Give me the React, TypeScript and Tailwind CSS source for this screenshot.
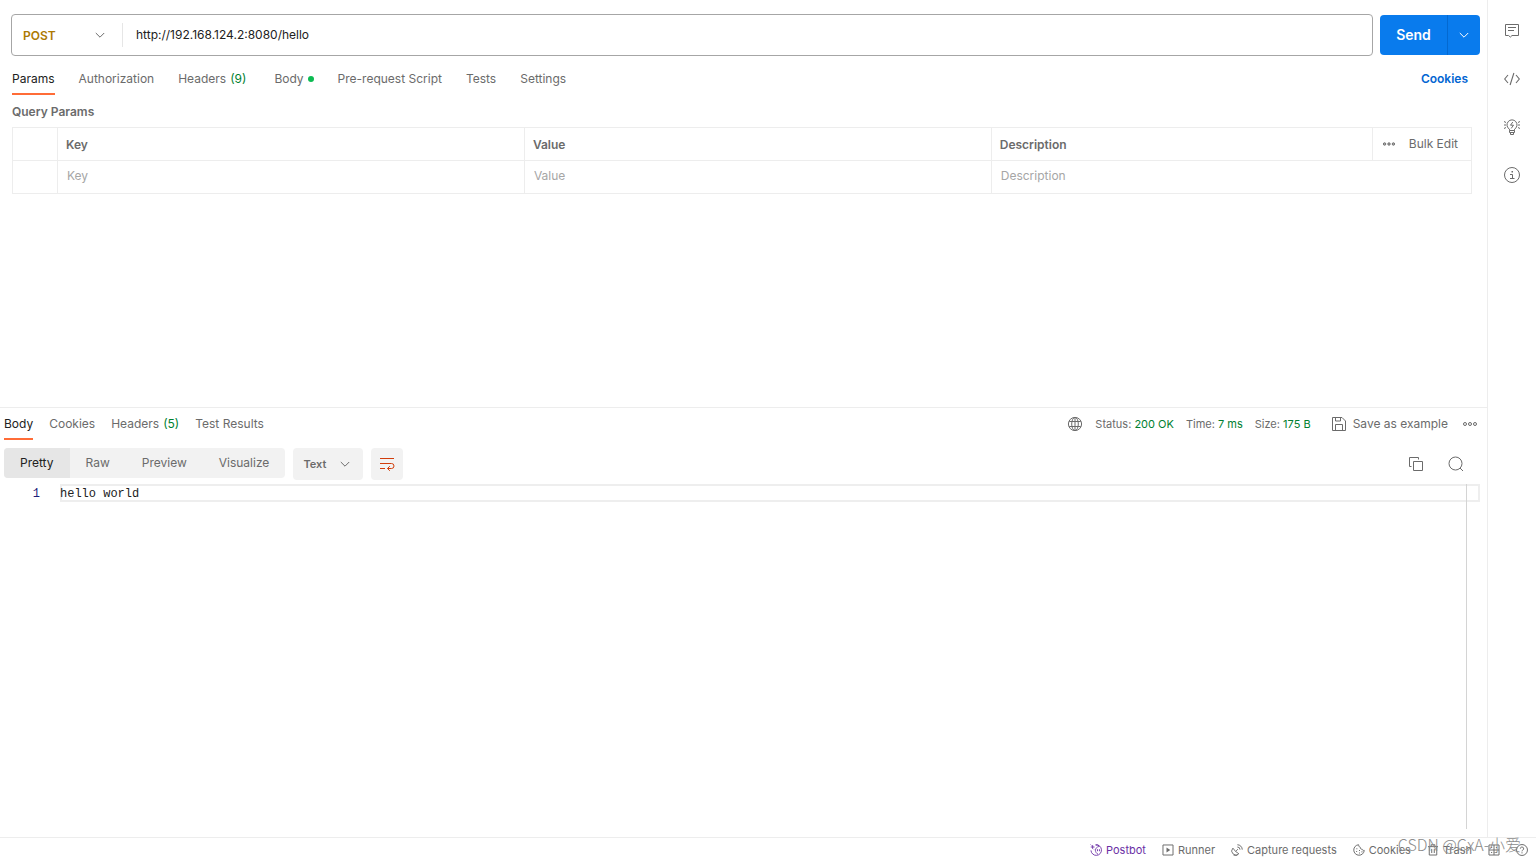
import type { ReactNode } from 'react';

const INTER = "font-['Inter','Noto_Sans_CJK_SC',sans-serif]";

function Icon({ size = 16, children, className = '' }: { size?: number; children: ReactNode; className?: string }) {
  return (
    <svg
      width={size}
      height={size}
      viewBox="0 0 16 16"
      fill="none"
      stroke="currentColor"
      strokeWidth="1"
      className={'shrink-0 ' + className}
      aria-hidden="true"
    >
      {children}
    </svg>
  );
}

const Chevron = ({ className = '' }: { className?: string }) => (
  <Icon size={16} className={className}>
    <path d="M3.8 6 8 10.2 12.2 6" />
  </Icon>
);

const CommentIcon = () => (
  <Icon>
    <path d="M1.5 1.5h13v11H8l-1.700 1.600-1.700-1.600H1.500z" />
    <path d="M4 4.500h8M4 7.500h6" />
  </Icon>
);

const CodeIcon = () => (
  <Icon>
    <path d="M4 4 .7 8 4 12M12 4l3.300 4L12 12M9.900 2 6.100 14" strokeWidth="1.100" />
  </Icon>
);

const BulbIcon = () => (
  <Icon>
    <path d="M5.500 11.500V10.200A5 5 0 1 1 10.500 10.200V11.500z" />
    <path d="M5.500 11.500v2h5v-2M6.500 13.500v2h3v-2" />
    <path d="M8.800 3 6.500 6.200h3L7.200 9.400" />
    <path d="M0 2.500l2 1M0 6h2M0 9.500l2-1M16 2.500l-2 1M16 6h-2M16 9.500l-2-1" />
  </Icon>
);

const InfoIcon = () => (
  <Icon>
    <circle cx="8" cy="8" r="7.500" />
    <path d="M6 7.500h2.500v4M6 11.500h4.500" />
    <path d="M7.500 4h1.500v1.500H7.500z" fill="currentColor" stroke="none" />
  </Icon>
);

const GlobeIcon = () => (
  <Icon>
    <circle cx="8" cy="8" r="6.600" />
    <ellipse cx="8" cy="8" rx="3.300" ry="6.600" />
    <path d="M8 1.400v13.200M2.200 5.500h11.600M2.200 10.500h11.600" />
  </Icon>
);

const SaveIcon = () => (
  <Icon>
    <path d="M1.500 1.500h9.500l3.500 3.500v9.500h-13z" />
    <path d="M4.500 1.500v3.500h5v-3.500M4.500 14.500v-6h7v6" />
  </Icon>
);

const CopyIcon = () => (
  <Icon>
    <path d="M5.500 5.500h9v9h-9z" />
    <path d="M3.500 10.500h-2v-9h9v2" />
  </Icon>
);

const SearchIcon = () => (
  <Icon>
    <circle cx="7.500" cy="7.500" r="6.500" />
    <path d="m12 12 3 3" />
  </Icon>
);

const WrapIcon = () => (
  <Icon>
    <path d="M1 2.500h14M1 7.500h11.500a2.500 2.500 0 0 1 0 5H8.500M1 12.500h5M10.800 10.200 8.500 12.500l2.300 2.300" />
  </Icon>
);

const DotsIcon = () => (
  <Icon>
    <circle cx="3" cy="8" r="1.500" />
    <circle cx="8" cy="8" r="1.500" />
    <circle cx="13" cy="8" r="1.500" />
  </Icon>
);

const SmallDotsIcon = () => (
  <Icon>
    <circle cx="3.600" cy="8" r="1.200" fill="currentColor" fillOpacity="0.5" />
    <circle cx="8" cy="8" r="1.200" fill="currentColor" fillOpacity="0.5" />
    <circle cx="12.400" cy="8" r="1.200" fill="currentColor" fillOpacity="0.5" />
  </Icon>
);

const PostbotIcon = () => (
  <Icon size={12}>
    <path d="M7.500 1.200a7 7 0 1 1-6.200 7.300M7.500 1.200c1.800-.3 3.500.1 4.800 1" strokeWidth="1.200" />
    <path d="M12.300 3.200c-3 .4-5 2.600-5 5.200 0 2.400 1.300 4.300 3.400 5.200" strokeWidth="1.100" />
    <path d="M10 7v2.600M12.600 7v2.600" strokeWidth="1.200" />
    <path d="M3.500 1.500v5M1 4h5M.8.800l1 1M5.500 7.500l.8.800" strokeWidth="1.200" />
  </Icon>
);

const RunnerIcon = () => (
  <Icon size={12}>
    <path d="M1.300 1.300h13.400v13.400H1.300z" strokeWidth="1.300" />
    <path d="M6 4.800 11 8l-5 3.200z" fill="currentColor" stroke="none" />
  </Icon>
);

const CaptureIcon = () => (
  <Icon size={12}>
    <path d="M2.500 5.500a5.300 5.300 0 1 0 8 7.500M2.500 5.500l3.700 4.500 4.300 3M6.200 10l3-3.200M3.500 15h5" strokeWidth="1.200" />
    <path d="M8.500 4a3.500 3.500 0 0 1 3.500 3.500M8.500 1a6.500 6.500 0 0 1 6.500 6.500" strokeWidth="1.300" />
  </Icon>
);

const CookieIcon = () => (
  <Icon size={12}>
    <path
      d="M7.500 1A7 7 0 1 0 15 8.500c-1.300.3-2.500-.2-2.800-1.600C10.500 7 9.400 6 9.700 4.300 8.300 4 7.500 2.600 7.500 1z"
      strokeWidth="1.300"
    />
    <path d="M4.500 6.200h1.300M4.200 10h1.300M8 8.700h1.300M8 12h1.300M11.300 10.500h1.300" strokeWidth="1.400" />
  </Icon>
);

const TrashIcon = () => (
  <Icon size={12}>
    <path d="M1.300 3.500h13.400M5.500 3.500V1h5v2.500M3 3.500v11.200h10V3.500M6.300 6.500v5.500M9.700 6.500v5.500" strokeWidth="1.300" />
  </Icon>
);

const PanesIcon = () => (
  <Icon size={12}>
    <path d="M1.300 1.300h13.400v13.400H1.300zM8 1.300v13.400M1.300 8h13.400" strokeWidth="1.300" />
    <path d="M4 4.700h1.600M10.500 4.700h1.600M4 11.300h1.600M10.500 11.300h1.600" strokeWidth="1.300" />
  </Icon>
);

const HelpIcon = () => (
  <Icon size={12}>
    <circle cx="8" cy="8" r="7.300" strokeWidth="1.300" />
    <path d="M5.800 6.200a2.200 2.200 0 1 1 3.300 1.900c-.8.400-1.100.8-1.100 1.700M8 11v1.500" strokeWidth="1.300" />
  </Icon>
);

function Tab({ label, count, dot, active }: { label: string; count?: string; dot?: boolean; active?: boolean }) {
  return (
    <button
      type="button"
      role="tab"
      aria-selected={!!active}
      className={
        'flex h-8 items-center gap-1 border-b-2 pt-0.5 whitespace-nowrap ' +
        (active ? 'border-[#ff6c37] text-[#212121]' : 'border-transparent text-[#6b6b6b]')
      }
    >
      {label}
      {count && <span className="text-[#007f31]">{count}</span>}
      {dot && <span className="size-1.5 rounded-full bg-[#0cbb52]" />}
    </button>
  );
}

function Stat({ label, value }: { label: string; value: string }) {
  return (
    <span className="whitespace-nowrap">
      {label} <span className="text-[#007f31]">{value}</span>
    </span>
  );
}

function FooterItem({ icon, label, className = '' }: { icon: ReactNode; label: string; className?: string }) {
  return (
    <button type="button" className={'flex items-center gap-1 whitespace-nowrap ' + className}>
      {icon}
      {label}
    </button>
  );
}

function RequestPane() {
  const cell = 'border border-[#ededed]';
  const field = 'block h-8 w-full px-[9px] pb-1 text-[#212121] outline-none placeholder:text-[#a6a6a6]';
  return (
    <section className="h-[407px] shrink-0">
      <div className="flex items-center gap-[7px] pt-3.5 pr-[7px] pl-[11px]">
        <div className="flex h-[42px] flex-1 items-center rounded border border-[#a6a6a6]">
          <div className="flex w-[111px] items-center border-r border-[#e6e6e6]">
            <div className="relative flex w-full items-center">
              <select
                aria-label="Method"
                defaultValue="POST"
                className="h-6 w-full appearance-none bg-transparent pt-0.5 pl-[11px] font-semibold text-[#ad7a03] outline-none"
              >
                <option>GET</option>
                <option>POST</option>
                <option>PUT</option>
                <option>DELETE</option>
              </select>
              <Chevron className="pointer-events-none absolute right-3.5" />
            </div>
          </div>
          <input
            aria-label="Request URL"
            defaultValue="http://192.168.124.2:8080/hello"
            className="h-10 flex-1 px-[13px] pb-0.5 text-[#212121] outline-none"
          />
        </div>
        <div className="flex h-10 overflow-hidden rounded bg-[#097bed] text-white">
          <button type="button" className="w-[67px] text-sm font-semibold">
            Send
          </button>
          <button
            type="button"
            aria-label="Send options"
            className="flex w-[33px] items-center justify-center border-l border-[#0469d1]"
          >
            <Chevron />
          </button>
        </div>
      </div>

      <div className="flex items-center justify-between pt-[7px] pr-[19px] pl-3">
        <div role="tablist" className="flex gap-6">
          <Tab label="Params" active />
          <Tab label="Authorization" />
          <div className="pr-1">
            <Tab label="Headers" count="(9)" />
          </div>
          <Tab label="Body" dot />
          <Tab label="Pre-request Script" />
          <Tab label="Tests" />
          <Tab label="Settings" />
        </div>
        <a href="#cookies" className="font-semibold text-[#0265d2]">
          Cookies
        </a>
      </div>

      <div className="pt-2 pr-[15px] pl-3">
        <h2 className="pb-1.5 leading-[18px] font-semibold">Query Params</h2>
        <table className="w-full table-fixed border-collapse">
          <colgroup>
            <col className="w-[45px]" />
            <col className="w-[32%]" />
            <col className="w-[32%]" />
            <col />
            <col className="w-[99px]" />
          </colgroup>
          <thead>
            <tr className="h-[33px] text-left">
              <th className={cell} aria-label="Enabled" />
              <th className={cell + ' px-2 pt-0.5 font-semibold'}>Key</th>
              <th className={cell + ' px-2 pt-0.5 font-semibold'}>Value</th>
              <th className={cell + ' px-2 pt-0.5 font-semibold'}>Description</th>
              <th className={cell + ' font-normal'}>
                <div className="flex items-center justify-between pr-[13px] pl-2">
                  <button type="button" aria-label="Column options">
                    <SmallDotsIcon />
                  </button>
                  <button type="button" className="whitespace-nowrap">
                    Bulk Edit
                  </button>
                </div>
              </th>
            </tr>
          </thead>
          <tbody>
            <tr className="h-[33px]">
              <td className={cell} />
              <td className={cell}>
                <input aria-label="Key" placeholder="Key" className={field} />
              </td>
              <td className={cell}>
                <input aria-label="Value" placeholder="Value" className={field} />
              </td>
              <td className={cell} colSpan={2}>
                <input aria-label="Description" placeholder="Description" className={field} />
              </td>
            </tr>
          </tbody>
        </table>
      </div>
    </section>
  );
}

function ResponsePane() {
  return (
    <section className="flex flex-1 flex-col border-t border-[#ededed]">
      <div className="flex items-center justify-between pr-[9px] pl-1">
        <div role="tablist" className="flex gap-4">
          <Tab label="Body" active />
          <Tab label="Cookies" />
          <Tab label="Headers" count="(5)" />
          <Tab label="Test Results" />
        </div>
        <div className="flex items-center gap-3 text-[11px]">
          <GlobeIcon />
          <Stat label="Status:" value="200 OK" />
          <Stat label="Time:" value="7 ms" />
          <Stat label="Size:" value="175 B" />
          <button type="button" className="ml-2 flex items-center gap-1.5 text-xs whitespace-nowrap">
            <SaveIcon />
            Save as example
          </button>
          <button type="button" aria-label="More actions" className="ml-0.5">
            <DotsIcon />
          </button>
        </div>
      </div>

      <div className="flex items-start pt-2 pr-[23px] pl-1">
        <div className="flex h-[30px] overflow-hidden rounded bg-[#f2f2f2]">
          <button type="button" className="bg-[#e6e6e6] px-4 text-[#212121]">
            Pretty
          </button>
          <button type="button" className="px-4">
            Raw
          </button>
          <button type="button" className="px-4">
            Preview
          </button>
          <button type="button" className="px-4">
            Visualize
          </button>
        </div>
        <div className="relative ml-2 flex h-8 w-[70px] items-center rounded bg-[#f2f2f2]">
          <select
            aria-label="Response format"
            defaultValue="Text"
            className="h-8 w-full appearance-none bg-transparent pl-2.5 text-[11px] font-semibold outline-none"
          >
            <option>Text</option>
            <option>JSON</option>
            <option>XML</option>
            <option>HTML</option>
          </select>
          <Chevron className="pointer-events-none absolute right-2.5" />
        </div>
        <button
          type="button"
          aria-label="Wrap lines"
          className="ml-2 flex size-8 items-center justify-center rounded bg-[#f2f2f2] text-[#d13d0b]"
        >
          <WrapIcon />
        </button>
        <div className="ml-auto flex h-8 items-center gap-6">
          <button type="button" aria-label="Copy">
            <CopyIcon />
          </button>
          <button type="button" aria-label="Search">
            <SearchIcon />
          </button>
        </div>
      </div>

      <div className="relative mt-1 flex flex-1 items-start pr-[7px] font-['Liberation_Mono',monospace]">
        <span className="w-[59px] pt-[3px] pr-[19px] text-right leading-[14px] text-[#1d1d78]">1</span>
        <code className="ml-px h-[18px] flex-1 font-['Liberation_Mono',monospace] leading-[20px] text-[#212121] inset-ring-2 inset-ring-[#eeeeee]">
          hello world
        </code>
        <span className="absolute top-0 right-5 bottom-2 border-l border-[#d4d4d4]" />
      </div>
    </section>
  );
}

export default function App() {
  return (
    <div className={'flex min-h-screen flex-col bg-white text-xs text-[#6b6b6b] ' + INTER}>
      <div className="flex flex-1">
        <main className="flex min-w-0 flex-1 flex-col">
          <RequestPane />
          <ResponsePane />
        </main>
        <aside className="flex w-[49px] flex-col items-center gap-8 border-l border-[#ededed] pt-[23px]">
          <button type="button" aria-label="Comments">
            <CommentIcon />
          </button>
          <button type="button" aria-label="Code">
            <CodeIcon />
          </button>
          <button type="button" aria-label="Related requests">
            <BulbIcon />
          </button>
          <button type="button" aria-label="Info">
            <InfoIcon />
          </button>
        </aside>
      </div>
      <footer className="relative flex h-[25px] items-center justify-end gap-4 border-t border-[#ededed] pr-2 text-[11px]">
        <FooterItem icon={<PostbotIcon />} label="Postbot" className="text-[#6b2fa5]" />
        <FooterItem icon={<RunnerIcon />} label="Runner" />
        <FooterItem icon={<CaptureIcon />} label="Capture requests" />
        <FooterItem icon={<CookieIcon />} label="Cookies" />
        <FooterItem icon={<TrashIcon />} label="Trash" />
        <button type="button" aria-label="Two-pane view">
          <PanesIcon />
        </button>
        <button type="button" aria-label="Help">
          <HelpIcon />
        </button>
        <span className="pointer-events-none absolute -top-1 right-[15px] font-['Noto_Sans_CJK_SC',sans-serif] text-base leading-5 font-light whitespace-nowrap text-[#8c8c8c]">
          CSDN @CxA-小爱
        </span>
      </footer>
    </div>
  );
}
